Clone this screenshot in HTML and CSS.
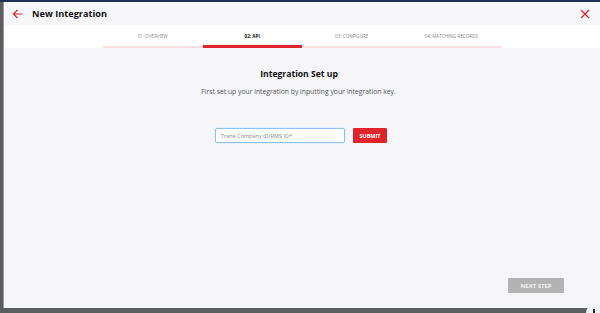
FILE: index.html
```html
<!DOCTYPE html>
<html lang="en">
<head>
    <meta charset="UTF-8">
    <title>New Integration</title>
    <link rel="stylesheet" href="styles.css">
</head>
<body>
<div class="backdrop">
    <div class="modal">
        <div class="modal-header">
            <div class="title-group">
                <svg class="back-icon" width="11" height="10" viewBox="0 0 11 10"><path d="M10.5 5H1.5M5.5 1L1.5 5l4 4" fill="none" stroke="#e0242b" stroke-width="1.2"/></svg>
                <h1>New Integration</h1>
            </div>
            <svg class="close-icon" width="10" height="10" viewBox="0 0 10 10"><path d="M1 1l8 8M9 1l-8 8" stroke="#e0242b" stroke-width="1.3"/></svg>
        </div>
        <div class="tabs-bar">
            <div class="tabs">
                <div class="tab">01: OVERVIEW</div>
                <div class="tab active">02: API</div>
                <div class="tab">03: CONFIGURE</div>
                <div class="tab">04: MATCHING RECORDS</div>
            </div>
        </div>
        <div class="modal-body">
            <h2>Integration Set up</h2>
            <p class="lead">First set up your integration by inputting your integration key.</p>
            <div class="key-form">
                <input class="key-input" type="text" placeholder="Trane Company ID/RMS ID*">
                <button class="btn-submit">SUBMIT</button>
            </div>
            <div class="footer">
                <button class="btn-next">NEXT STEP</button>
            </div>
        </div>
    </div>
    <div class="corner-badge"></div>
</div>
</body>
</html>
```

FILE: styles.css
```css
body {
    margin: 0;
    font-family: 'Open Sans', 'Noto Sans', sans-serif;
    color: #222;
}
.backdrop {
    width: 600px;
    height: 313px;
    background-color: #5b5d60;
    border-top: 2px solid #1f3253;
    box-sizing: border-box;
    padding: 0 0 5px 3px;
    position: relative;
    overflow: hidden;
}
.modal {
    height: 100%;
    background-color: #f6f6f9;
    border-left: 1px solid #9a9a9a;
    display: flex;
    flex-direction: column;
}
.modal-header {
    height: 23px;
    display: flex;
    align-items: center;
    justify-content: space-between;
    padding: 0 10px 0 8px;
    background-color: #f7f7f9;
}
.title-group {
    display: flex;
    align-items: center;
    gap: 9px;
}
.back-icon {
    display: block;
}
h1 {
    margin: 0;
    font-size: 9.2px;
    font-weight: 700;
    color: #111;
}
.close-icon {
    display: block;
}
.tabs-bar {
    background-color: #fff;
    height: 23px;
    display: flex;
    justify-content: center;
}
.tabs {
    display: flex;
    width: 398px;
}
.tab {
    flex: 1;
    display: flex;
    align-items: center;
    justify-content: center;
    font-size: 4.6px;
    color: #888;
    border-bottom: 2px solid #fbdde0;
    padding-top: 1px;
}
.tab.active {
    color: #111;
    font-weight: 700;
    border-bottom: 3px solid #e0242b;
    padding-top: 2px;
}
.modal-body {
    flex: 1;
    display: flex;
    flex-direction: column;
    align-items: center;
    padding-top: 20px;
}
h2 {
    margin: 0 0 0 -6px;
    font-size: 8.6px;
    font-weight: 700;
    color: #111;
}
.lead {
    margin: 7px 0 0 -7px;
    font-size: 6.8px;
    color: #555;
}
.key-form {
    display: flex;
    gap: 8px;
    margin-top: 32px;
    margin-left: -2px;
}
.key-input {
    width: 130px;
    height: 15px;
    box-sizing: border-box;
    border: 1px solid #8ec2ec;
    border-radius: 2px;
    box-shadow: 0 0 2px #b8dbf7;
    padding: 0 5px;
    font-family: inherit;
    font-size: 5.5px;
    background: #fff;
    outline: none;
}
.key-input::placeholder {
    color: #888;
}
.btn-submit {
    width: 34px;
    height: 15px;
    border: none;
    border-radius: 1px;
    background-color: #e0242b;
    color: #fff;
    font-family: inherit;
    font-size: 5.5px;
    font-weight: 700;
    padding: 0;
}
.footer {
    margin-top: auto;
    align-self: stretch;
    display: flex;
    justify-content: flex-end;
    padding: 0 36px 15px 0;
}
.btn-next {
    width: 56px;
    height: 15px;
    border: none;
    border-radius: 1px;
    background-color: #b3b3b3;
    color: #f3f3f3;
    font-family: inherit;
    font-size: 6px;
    font-weight: 700;
    padding: 0;
}
.corner-badge {
    position: absolute;
    right: -6px;
    bottom: -8px;
    width: 20px;
    height: 16px;
    border-radius: 8px;
    background-color: #eef0f3;
}
.corner-badge::after {
    content: '';
    position: absolute;
    left: 7px;
    top: 4px;
    width: 2px;
    height: 6px;
    background-color: #222;
}
```
